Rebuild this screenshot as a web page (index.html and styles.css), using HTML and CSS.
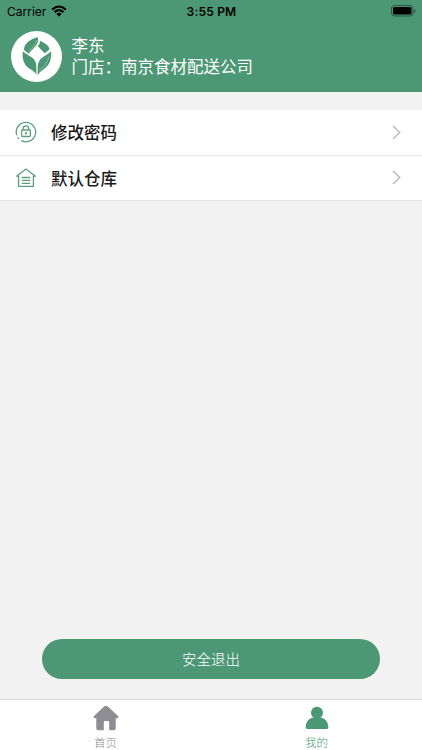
FILE: index.html
```
<!DOCTYPE html>
<html lang="zh-CN">
<head>
  <meta charset="UTF-8">
  <meta name="viewport" content="width=device-width, initial-scale=1">
  <title>我的</title>
  <link rel="stylesheet" href="styles.css">
</head>
<body>

  <!-- 顶部 -->
  <header class="header">
    <div class="status-bar">
      <div class="carrier">
        <span>Carrier</span>
        <svg class="wifi" viewBox="0 0 16 12">
          <path d="M1.2 4.6Q8-1.6 14.8 4.6M3.6 7.1Q8 3.1 12.4 7.1" fill="none" stroke="#000" stroke-width="2.1"/>
          <path d="M5.4 8.9Q8 6.7 10.6 8.9L8 11.6Z"/>
        </svg>
      </div>
      <div class="time">3:55 PM</div>
      <div class="power">
        <svg class="battery" viewBox="0 0 25 12">
          <rect x="0.5" y="0.5" width="21.5" height="10.5" rx="3" fill="none" stroke="#2b5542"/>
          <rect x="2" y="2" width="18.5" height="7.5" rx="1.5"/>
          <path d="M23.3 4v4q1.2-.6 1.2-2t-1.2-2z" fill="#2b5542"/>
        </svg>
      </div>
    </div>
    <div class="user">
      <svg class="avatar" viewBox="0 0 153 153">
        <circle cx="76.5" cy="76.5" r="76.5" fill="#fff"/>
        <g fill="#4c9774">
          <path d="M80 18Q38 32 39 57L53 68L74 45Q84 34 80 18Z"/>
          <path d="M87 29Q113 40 116 55L101 67L80 45Q88 38 87 29Z"/>
          <path d="M35 61Q43 67 62 79Q76 88 76 107V131Q70 120 52 111Q32 97 35 61Z"/>
          <path d="M121 61Q113 67 95 79Q81 89 80 107V134Q84 124 102 112Q122 98 121 61Z"/>
        </g>
        <path d="M77 27Q75 40 53 62M84 118Q107 104 114 76" fill="none" stroke="#8fc2aa" stroke-width="2.5"/>
      </svg>
      <div class="user-info">
        <div>李东</div>
        <div>门店：南京食材配送公司</div>
      </div>
    </div>
  </header>

  <!-- 菜单 -->
  <main class="main">
    <div class="menu">
      <a class="menu-item">
        <svg class="menu-icon" viewBox="0 0 22 22">
          <path d="M1.8 14.3A9.7 9.7 0 1 1 6.4 19.6" />
          <circle class="dot" cx="3.4" cy="17.2" r="0.9"/>
          <rect x="6.6" y="9" width="8.8" height="6.5" rx="1"/>
          <path d="M8.2 9V7.7a2.8 2.8 0 0 1 5.6 0V9M11 11v2.6M10 11.9h2"/>
        </svg>
        <span>修改密码</span>
        <svg class="arrow" viewBox="0 0 9 15"><path d="M1 1l6.7 6.5L1 14"/></svg>
      </a>
      <a class="menu-item">
        <svg class="menu-icon" viewBox="0 0 22 22">
          <path d="M2 9.4V8.9L11 2l9 6.9v.5H18.4V19.4H3.6V9.4ZM6.7 10.5h8.6M6.7 13.4h8.6M6.7 16.3h8.6"/>
        </svg>
        <span>默认仓库</span>
        <svg class="arrow" viewBox="0 0 9 15"><path d="M1 1l6.7 6.5L1 14"/></svg>
      </a>
    </div>
    <button class="logout">安全退出</button>
  </main>

  <!-- 底部导航 -->
  <nav class="tabbar">
    <a class="tab">
      <svg class="tab-icon" viewBox="0 0 26 26">
        <path d="M11.4 1.3Q13 0 14.6 1.3L25 11.1Q26.2 13.2 23.9 13.2H22.7V23.4Q22.7 25.2 20.9 25.2H16.2V17Q16.2 16 15.2 16H11.8Q10.8 16 10.8 17V25.2H5.1Q3.3 25.2 3.3 23.4V13.2H2.1Q-.2 13.2 1 11.1Z"/>
      </svg>
      <span>首页</span>
    </a>
    <a class="tab active">
      <svg class="tab-icon" viewBox="0 0 26 26">
        <circle cx="13" cy="7.7" r="6"/>
        <path d="M1.7 22.3C1.7 16.8 5.5 13 9.5 12.6H16.5C20.5 13 24.3 16.8 24.3 22.3Q24.3 24 22.8 24H3.2Q1.7 24 1.7 22.3Z"/>
      </svg>
      <span>我的</span>
    </a>
  </nav>

</body>
</html>
```

FILE: styles.css
```
* {
  box-sizing: border-box;
}

body {
  margin: 0;
  height: 100vh;
  display: flex;
  flex-direction: column;
  background-color: #f2f2f2;
  font-family: "Noto Sans CJK SC", sans-serif;
}

svg {
  display: block;
  flex: none;
}

.header {
  height: 92px;
  background-color: #4c9774;
}

.status-bar {
  display: grid;
  grid-template-columns: 1fr auto 1fr;
  align-items: center;
  height: 22px;
  padding: 0 6px 0 7px;
  font-family: Inter, sans-serif;
  font-size: 12px;
  color: #000;
}

.carrier {
  display: flex;
  align-items: center;
  gap: 5px;
}

.wifi {
  width: 16px;
  height: 12px;
}

.time {
  font-weight: 600;
  letter-spacing: 0.2px;
}

.power {
  display: flex;
  justify-content: flex-end;
}

.battery {
  width: 25px;
  height: 12px;
}

.user {
  display: flex;
  align-items: center;
  height: 68px;
  padding-left: 10.5px;
}

.avatar {
  width: 51px;
  height: 51px;
}

.user-info {
  margin-left: 10px;
  font-size: 16.5px;
  line-height: 21px;
  color: #fff;
}

.main {
  flex: 1;
  display: flex;
  flex-direction: column;
  justify-content: space-between;
  padding: 18px 0 20px;
}

.menu-item {
  display: flex;
  align-items: center;
  height: 45.5px;
  padding: 0 21px 0 15px;
  background-color: #fff;
  border-bottom: 1px solid #e6e6e6;
  font-size: 16.5px;
  line-height: 24px;
  font-weight: 500;
  color: #1a1a1a;
}

.menu-icon {
  width: 22px;
  height: 22px;
  margin-right: 14px;
  fill: none;
  stroke: #5d9f80;
  stroke-width: 1.3;
}

.dot {
  fill: #5d9f80;
  stroke: none;
}

.arrow {
  width: 9px;
  height: 15px;
  margin-left: auto;
  fill: none;
  stroke: #bcbcbc;
  stroke-width: 1.5;
}

.logout {
  height: 40.5px;
  margin: 0 42px;
  border: none;
  border-radius: 21px;
  background-color: #4c9774;
  font-family: inherit;
  font-size: 14.5px;
  font-weight: 300;
  color: #fff;
}

.tabbar {
  display: flex;
  height: 51px;
  background-color: #fff;
  border-top: 1px solid #dcdcdc;
}

.tab {
  flex: 1;
  display: flex;
  flex-direction: column;
  align-items: center;
  padding-top: 5px;
  font-size: 11.5px;
  font-weight: 300;
  line-height: 16px;
  color: #8e8d94;
}

.tab-icon {
  width: 26px;
  height: 26px;
  margin-bottom: 3px;
  fill: currentColor;
}

.tab.active {
  color: #4c9774;
}
```
